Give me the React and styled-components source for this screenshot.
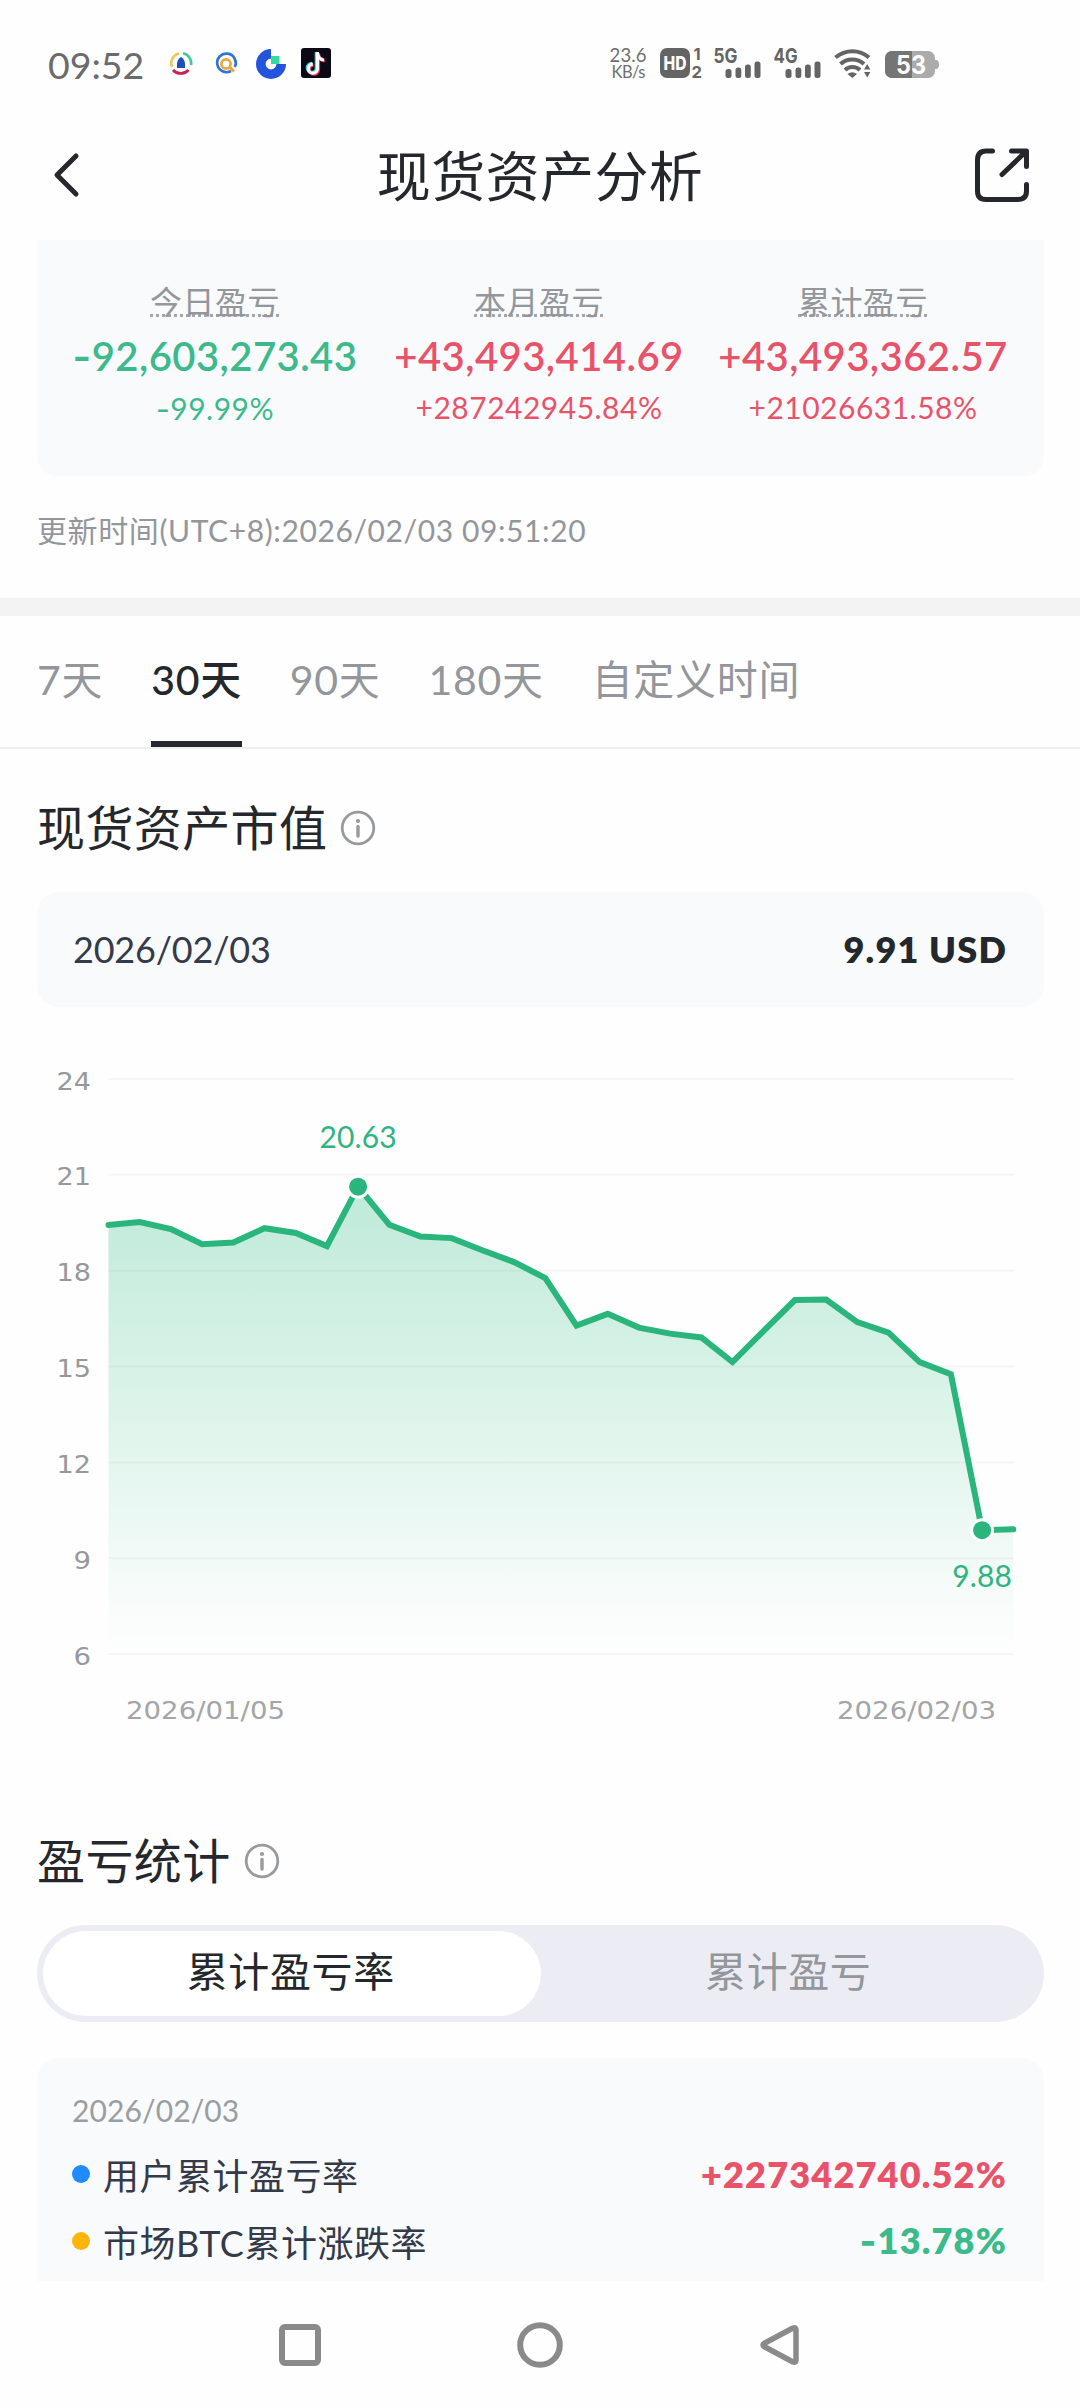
import React, { useState } from 'react';
import styled, { createGlobalStyle } from 'styled-components';

const GREEN = '#3cba8b';
const RED = '#e9536a';
const DARK = '#24272c';
const GRAY = '#93969b';

const GlobalStyle = createGlobalStyle`
    * {
        box-sizing: border-box;
    }

    body {
        margin: 0;
        background-color: #fefefe;
        color: ${DARK};
        font-family: Lato, "Noto Sans CJK SC", sans-serif;
    }
`;

const Page = styled.div`
    width: 1080px;
    height: 2408px;
    overflow: hidden;
    display: flex;
    flex-direction: column;
`;

// Status bar
const StatusBar = styled.div`
    height: 110px;
    padding: 16px 141px 0 48px;
    display: flex;
    justify-content: space-between;
    align-items: center;
    flex-shrink: 0;
`;

const StatusLeft = styled.div`
    display: flex;
    align-items: center;
`;

const Clock = styled.span`
    width: 118px;
    font-size: 37.5px;
    line-height: 44px;
    color: #6b6b6b;
    padding-top: 3px;
`;

// Header
const Header = styled.header`
    height: 130px;
    padding: 0 48px;
    display: flex;
    justify-content: space-between;
    align-items: center;
    flex-shrink: 0;
`;

const Title = styled.h1`
    margin: 0;
    padding-top: 3px;
    font-size: 54px;
    line-height: 70px;
    font-weight: 400;
    letter-spacing: 0.4px;
`;

const IconButton = styled.button`
    display: flex;
    width: 60px;
    height: 60px;
    padding: 0;
    border: none;
    background: none;
    cursor: pointer;
`;

// Summary
const SummaryCard = styled.section`
    margin: 0 36px 0 37px;
    height: 236px;
    padding: 38px 19px 0 16px;
    display: grid;
    grid-template-columns: repeat(3, 324px);
    justify-content: center;
    border-radius: 0 0 20px 20px;
    background-color: #f8fafc;
    flex-shrink: 0;
`;

const SummaryItem = styled.div`
    display: flex;
    flex-direction: column;
    align-items: center;
    color: ${(p) => p.$color};
`;

const SummaryLabel = styled.span`
    font-size: 32px;
    line-height: 48px;
    letter-spacing: 0.5px;
    color: ${GRAY};
    background: repeating-linear-gradient(90deg, #a3a6ab 0 3px, transparent 3px 6px) 0 36px / 100% 3px no-repeat;
`;

const SummaryValue = styled.span`
    font-size: 40px;
    line-height: 60px;
    font-weight: 600;
    letter-spacing: 0.45px;
    white-space: nowrap;
`;

const SummaryPercent = styled.span`
    font-size: 30px;
    line-height: 42px;
    letter-spacing: 0.5px;
`;

const Minus = styled.span`
    font-family: Inter, sans-serif;
`;

const UpdateTime = styled.p`
    margin: 32px 37px 46px;
    font-size: 30px;
    line-height: 44px;
    letter-spacing: 0.6px;
    color: ${GRAY};
`;

const Divider = styled.div`
    height: 18px;
    background-color: #f3f3f5;
    flex-shrink: 0;
`;

// Tabs
const Tabs = styled.nav`
    height: 133px;
    padding: 0 37px;
    display: flex;
    gap: 48px;
    border-bottom: 2px solid #eeeef0;
    flex-shrink: 0;
`;

const Tab = styled.button`
    height: 131px;
    padding: 35px 0 32px;
    border: none;
    border-bottom: 6px solid ${(p) => (p.$active ? DARK : 'transparent')};
    background: none;
    font-family: inherit;
    font-size: 41px;
    line-height: 58px;
    font-weight: ${(p) => (p.$active ? 500 : 400)};
    letter-spacing: 0.7px;
    color: ${(p) => (p.$active ? DARK : GRAY)};
    cursor: pointer;
`;

// Sections
const SectionTitle = styled.h2`
    margin: ${(p) => p.$top}px 37px 34px;
    display: flex;
    align-items: center;
    gap: 13px;
    font-size: 48px;
    line-height: 60px;
    font-weight: 400;
    letter-spacing: 0.4px;
    flex-shrink: 0;
`;

const ValueCard = styled.div`
    margin: 0 36px 0 37px;
    height: 115px;
    padding: 0 37px 2px 36px;
    display: flex;
    justify-content: space-between;
    align-items: center;
    border-radius: 22px;
    background-color: #f8fafc;
    font-size: 36px;
    flex-shrink: 0;
`;

const ValueDate = styled.span`
    letter-spacing: -0.2px;
    color: #353a4a;
`;

const StrongValue = styled.span`
    font-size: 36px;
    font-weight: 800;
    letter-spacing: 1.2px;
    color: ${(p) => p.$color || DARK};
`;

const ChartSvg = styled.svg`
    display: block;
    flex-shrink: 0;
`;

const AxisText = styled.text`
    font-family: "DejaVu Sans", sans-serif;
    font-size: 25px;
    fill: ${(p) => p.$color || '#96989c'};
`;

const PointText = styled.text`
    font-size: 30px;
    letter-spacing: 0.1px;
    fill: #2fb481;
`;

// Toggle
const Toggle = styled.div`
    margin: 0 36px 36px 37px;
    height: 97px;
    padding: 6px;
    display: grid;
    grid-template-columns: 1fr 1fr;
    border-radius: 49px;
    background-color: #ecedf4;
    flex-shrink: 0;
`;

const ToggleOption = styled.button`
    padding: 0 2px 3px 0;
    border: none;
    border-radius: 43px;
    background-color: ${(p) => (p.$active ? '#ffffff' : 'transparent')};
    color: ${(p) => (p.$active ? DARK : GRAY)};
    font-family: inherit;
    font-size: 41px;
    line-height: 58px;
    letter-spacing: 0.6px;
    cursor: pointer;
`;

const StatsCard = styled.div`
    margin: 0 36px 0 37px;
    height: 223px;
    padding: 30px 37px 0 35px;
    border-radius: 22px 22px 0 0;
    background-color: #f8fafc;
    overflow: hidden;
    flex-shrink: 0;
`;

const StatsDate = styled.div`
    margin-bottom: 8px;
    font-size: 30px;
    line-height: 44px;
    letter-spacing: 0.1px;
    color: #9a9da1;
`;

const StatsRow = styled.div`
    height: 67px;
    display: flex;
    align-items: center;
    font-size: 36px;
    color: #353a4a;
`;

const Dot = styled.span`
    width: 18px;
    height: 18px;
    margin-right: 13px;
    border-radius: 50%;
    background-color: ${(p) => p.$color};
`;

const StatsLabel = styled.span`
    flex: 1;
    letter-spacing: 0.5px;
    padding-top: 1px;
`;

const BottomNav = styled.nav`
    height: 127px;
    display: grid;
    grid-template-columns: repeat(3, 240px);
    justify-content: center;
    align-items: center;
    justify-items: center;
    flex-shrink: 0;
`;

const summary = [
    { label: '今日盈亏', value: '-92,603,273.43', percent: '-99.99%', color: GREEN },
    { label: '本月盈亏', value: '+43,493,414.69', percent: '+287242945.84%', color: RED },
    { label: '累计盈亏', value: '+43,493,362.57', percent: '+21026631.58%', color: RED },
];

const ranges = ['7天', '30天', '90天', '180天', '自定义时间'];

const prices = [
    19.43, 19.52, 19.3, 18.83, 18.88, 19.33, 19.18, 18.77, 20.63, 19.44,
    19.07, 19.02, 18.63, 18.27, 17.77, 16.28, 16.65, 16.22, 16.03, 15.91,
    15.14, 16.12, 17.08, 17.1, 16.39, 16.06, 15.14, 14.76, 9.88, 9.91,
];

const Signed = ({ text }) => (
    text.startsWith('-') ? <><Minus>-</Minus>{text.slice(1)}</> : text
);

const InfoIcon = () => (
    <svg width="36" height="36" viewBox="0 0 36 36" fill="none">
        <circle cx="18" cy="18" r="15.8" stroke="#979a9e" strokeWidth="2.8" />
        <circle cx="18" cy="11" r="2.1" fill="#979a9e" />
        <path d="M18 16.5V26" stroke="#979a9e" strokeWidth="3.4" strokeLinecap="round" />
    </svg>
);

// Notification icons next to the clock
const AppIcons = () => (
    <svg width="166" height="34" viewBox="166 45 166 34" fill="none">
        <path d="M172 66A10 10 0 0 1 179 52.5" stroke="#ecc95a" strokeWidth="2.6" />
        <path d="M183 52.3A10 10 0 0 1 191 64" stroke="#45c79b" strokeWidth="2.6" />
        <path d="M173 69A10.5 10.5 0 0 0 188.5 69" stroke="#c62459" strokeWidth="2.8" />
        <path d="M181 56C178 58 177 60.5 177 63V67H185V63C185 60.5 184 58 181 56Z" fill="#1c50b8" />
        <path d="M231 70A9.3 9.3 0 1 1 234.8 66" stroke="#2f74d6" strokeWidth="2.7" />
        <circle cx="226" cy="63" r="4.6" stroke="#eda63a" strokeWidth="2.7" />
        <path d="M229.5 66L234 70.5" stroke="#eda63a" strokeWidth="3" />
        <path d="M271 52.8A10.2 10.2 0 1 0 281.2 63" stroke="#2454dc" strokeWidth="9.6" />
        <rect x="271" y="55" width="8.5" height="8" fill="#35dca2" />
        <rect x="301" y="47" width="30" height="30" rx="3" fill="#0b0a14" />
        <path d="M316.5 51V67A4.5 4.5 0 1 1 312 62.5M316.5 52C317 56 320 58.5 323 58.5" stroke="#35d8d4" strokeWidth="3.6" />
        <path d="M318.3 52V68.5A4.5 4.5 0 1 1 313.5 64M318.3 53C319 57 321.5 59.5 324.8 59.5" stroke="#e6365e" strokeWidth="3.6" />
        <path d="M317.4 51V67.7A4.5 4.5 0 1 1 312.8 63.2M317.4 52C318 56.3 320.8 59 324 59" stroke="#fff" strokeWidth="3.2" />
    </svg>
);

const Signal = ({ x, label }) => (
    <g fill="#646464">
        <text x={x} y="63" fontFamily="Inter" fontSize="20.5" fontWeight="700" textLength="24" lengthAdjust="spacingAndGlyphs">{label}</text>
        <rect x={x + 12} y="69" width="6" height="9" rx="2.5" />
        <rect x={x + 22} y="67.5" width="5.8" height="10.5" rx="2.5" />
        <rect x={x + 31.5} y="64.5" width="5.8" height="13.5" rx="2.5" />
        <rect x={x + 41} y="61.5" width="6" height="16.5" rx="2.5" />
    </g>
);

const SystemIcons = () => (
    <svg width="331" height="36" viewBox="608 45 331 36">
        <g fill="#6f6f6f" fontFamily="Lato" fontSize="18.5">
            <text x="609.5" y="62" textLength="37">23.6</text>
            <text x="611.5" y="78" fontSize="16.5" textLength="34">KB/s</text>
        </g>
        <rect x="660" y="48" width="30" height="30" rx="7" fill="#646464" />
        <text x="675" y="69.5" fontFamily="Inter" fontSize="18.5" fontWeight="800" textAnchor="middle" textLength="23" lengthAdjust="spacingAndGlyphs" fill="#fff">HD</text>
        <g fill="#646464" fontFamily="Inter" fontWeight="700" fontSize="16.5">
            <text x="693.5" y="60">1</text>
            <text x="691.5" y="78">2</text>
        </g>
        <Signal x={713.5} label="5G" />
        <Signal x={773.5} label="4G" />
        <g stroke="#646464" strokeWidth="4" fill="none">
            <path d="M835.5 57.5C845.5 49 859.5 49 869 57.5" />
            <path d="M840.5 64C847 58 857.5 58 864 64" />
            <path d="M845 70C849 66 856 66 860 70" />
        </g>
        <path d="M847.5 74Q852.3 70.5 857 74L852.3 78Z" fill="#646464" />
        <path d="M864 69.5L867.2 64L870.4 69.5ZM864 72H870.4L867.2 77.5Z" fill="#646464" />
        <rect x="885" y="51" width="50" height="27" rx="7" fill="#ababab" />
        <path d="M892 51H912V78H892A7 7 0 0 1 885 71V58A7 7 0 0 1 892 51Z" fill="#757575" />
        <path d="M935 60H936.5Q939 60.5 939 64.5T936.5 69H935Z" fill="#ababab" />
        <text x="911" y="73.5" fontFamily="Inter" fontSize="25" fontWeight="700" textAnchor="middle" textLength="30" lengthAdjust="spacingAndGlyphs" fill="#fff">53</text>
    </svg>
);

const LEFT = 108.5;
const STEP = 31.2;
const toX = (i) => LEFT + i * STEP;
const toY = (v) => 72 + (24 - v) * 31.95;

const Chart = () => {
    const line = prices.map((v, i) => `${toX(i)},${toY(v)}`).join(' ');
    const area = `${LEFT},${toY(6)} ${line} ${toX(29)},${toY(6)}`;

    return (
        <ChartSvg width="1080" height="784" viewBox="0 0 1080 784">
            <defs>
                <linearGradient id="fill" gradientUnits="userSpaceOnUse" x1="0" y1={toY(20.63)} x2="0" y2={toY(6)}>
                    <stop offset="0" stopColor="#2abb80" stopOpacity="0.3" />
                    <stop offset="1" stopColor="#2abb80" stopOpacity="0" />
                </linearGradient>
            </defs>
            {[24, 21, 18, 15, 12, 9, 6].map((v) => (
                <g key={v}>
                    <line x1={LEFT} x2="1014" y1={toY(v)} y2={toY(v)} stroke="#f5f5f6" strokeWidth="2" />
                    <AxisText
                        x={v > 9 ? 56.5 : 73.5}
                        y={toY(v) + 10.5}
                        textLength={v > 9 ? 34.5 : 17.5}
                        lengthAdjust="spacingAndGlyphs"
                    >
                        {v}
                    </AxisText>
                </g>
            ))}
            <polygon points={area} fill="url(#fill)" />
            <polyline points={line} fill="none" stroke="#2ab57d" strokeWidth="6" strokeLinecap="round" strokeLinejoin="miter" />
            <circle cx={toX(8)} cy={toY(20.63)} r="10.5" fill="#2ab57d" stroke="#fff" strokeWidth="3" />
            <circle cx={toX(28)} cy={toY(9.88)} r="10.5" fill="#2ab57d" stroke="#fff" strokeWidth="3" />
            <PointText x={toX(8)} y="141" textAnchor="middle">20.63</PointText>
            <PointText x={toX(28)} y="580" textAnchor="middle">9.88</PointText>
            <AxisText $color="#a3a5a8" x="126" y="712" textLength="159" lengthAdjust="spacingAndGlyphs">2026/01/05</AxisText>
            <AxisText $color="#a3a5a8" x="837" y="712" textLength="159" lengthAdjust="spacingAndGlyphs">2026/02/03</AxisText>
        </ChartSvg>
    );
};

const App = () => {
    const [range, setRange] = useState('30天');
    const [mode, setMode] = useState('累计盈亏率');

    return (
        <Page>
            <GlobalStyle />
            <StatusBar>
                <StatusLeft>
                    <Clock>09:52</Clock>
                    <AppIcons />
                </StatusLeft>
                <SystemIcons />
            </StatusBar>

            <Header>
                <IconButton>
                    <svg width="60" height="60" viewBox="48 144 60 60" fill="none">
                        <path d="M76 155L57 174L76 193" stroke={DARK} strokeWidth="5" strokeLinecap="round" strokeLinejoin="round" />
                    </svg>
                </IconButton>
                <Title>现货资产分析</Title>
                <IconButton>
                    <svg width="60" height="60" viewBox="972 145 60 60" fill="none" stroke={DARK} strokeWidth="5" strokeLinecap="round">
                        <path d="M992.5 151H986Q977.5 151 977.5 160V191Q977.5 199.5 986 199.5H1017.5Q1026.5 199.5 1026.5 191V184.5" />
                        <path d="M1002 174.5L1026 151.5M1011.5 151H1026.5V166.5" strokeLinejoin="round" />
                    </svg>
                </IconButton>
            </Header>

            <SummaryCard>
                {summary.map((item) => (
                    <SummaryItem key={item.label} $color={item.color}>
                        <SummaryLabel>{item.label}</SummaryLabel>
                        <SummaryValue><Signed text={item.value} /></SummaryValue>
                        <SummaryPercent><Signed text={item.percent} /></SummaryPercent>
                    </SummaryItem>
                ))}
            </SummaryCard>
            <UpdateTime>更新时间(UTC+8):2026/02/03 09:51:20</UpdateTime>
            <Divider />

            <Tabs>
                {ranges.map((name) => (
                    <Tab key={name} $active={name === range} onClick={() => setRange(name)}>{name}</Tab>
                ))}
            </Tabs>

            <SectionTitle $top={49}>现货资产市值<InfoIcon /></SectionTitle>
            <ValueCard>
                <ValueDate>2026/02/03</ValueDate>
                <StrongValue>9.91 USD</StrongValue>
            </ValueCard>
            <Chart />

            <SectionTitle $top={40}>盈亏统计<InfoIcon /></SectionTitle>
            <Toggle>
                {['累计盈亏率', '累计盈亏'].map((name) => (
                    <ToggleOption key={name} $active={name === mode} onClick={() => setMode(name)}>{name}</ToggleOption>
                ))}
            </Toggle>
            <StatsCard>
                <StatsDate>2026/02/03</StatsDate>
                <StatsRow>
                    <Dot $color="#1e8cff" />
                    <StatsLabel>用户累计盈亏率</StatsLabel>
                    <StrongValue $color={RED}>+227342740.52%</StrongValue>
                </StatsRow>
                <StatsRow>
                    <Dot $color="#fdb50b" />
                    <StatsLabel>市场BTC累计涨跌率</StatsLabel>
                    <StrongValue $color={GREEN}><Signed text="-13.78%" /></StrongValue>
                </StatsRow>
            </StatsCard>

            <BottomNav>
                <svg width="50" height="50" viewBox="0 0 50 50" fill="none">
                    <rect x="7" y="7" width="36" height="36" rx="3" stroke="#8a8a8a" strokeWidth="6" />
                </svg>
                <svg width="50" height="50" viewBox="0 0 50 50" fill="none">
                    <circle cx="25" cy="25" r="19.8" stroke="#8a8a8a" strokeWidth="6" />
                </svg>
                <svg width="50" height="50" viewBox="755 2320 50 50" fill="none">
                    <path d="M764 2343.5L793 2328Q796 2327 796 2330V2360Q796 2363 793 2362L764 2346.5Q762 2345 764 2343.5Z" stroke="#8a8a8a" strokeWidth="5.5" strokeLinejoin="round" />
                </svg>
            </BottomNav>
        </Page>
    );
};

export default App;
